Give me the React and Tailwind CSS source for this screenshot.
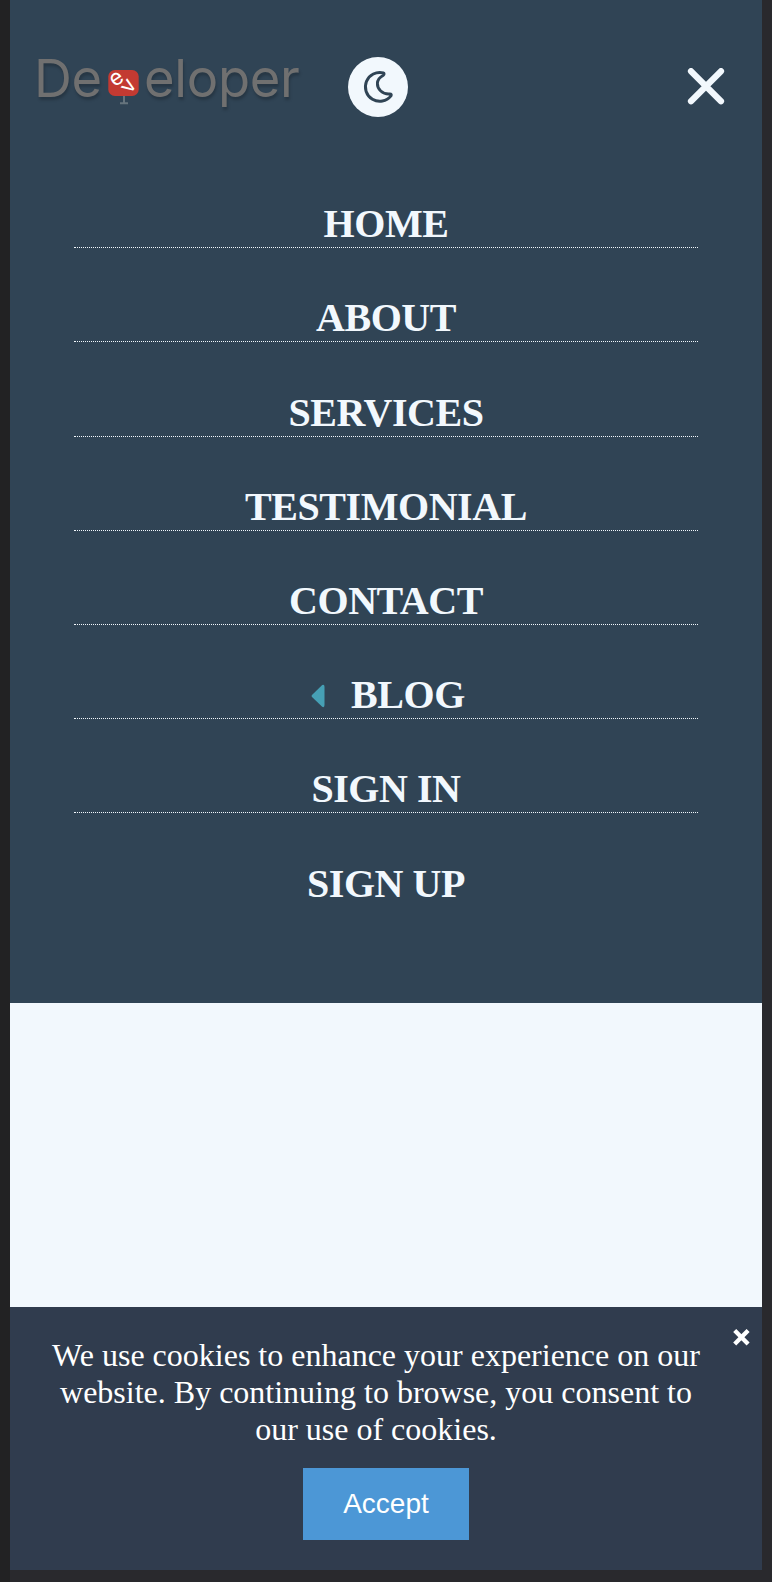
const links = ['Home', 'About', 'Services', 'Testimonial', 'Contact', 'Blog', 'Sign in', 'Sign up'];

function Logo() {
  return (
    <a className="mb-[19px] flex h-[64px] w-[274px] items-center font-['Inter',sans-serif] text-[52.5px] leading-[64px] text-[#707070] [text-shadow:1px_3px_3px_rgba(0,0,0,0.22)]">
      <span className="w-[74px] tracking-[-0.5px]">De</span>
      <svg className="mt-[20px] h-[36px] w-[31px] shrink-0 overflow-visible [text-shadow:none]" viewBox="0 0 31 36">
        <path d="M16 26v7M12 33.3h8" stroke="#66747d" strokeWidth="2" />
        <rect x="0.3" y="0" width="30.4" height="26" rx="6.5" fill="#c33a32" />
        <g fill="#fff" fontSize="22" textAnchor="middle">
          <text transform="translate(8.7 9) rotate(-35)" y="5.8">e</text>
          <text transform="translate(21 16.4) rotate(-55)" y="5.9">v</text>
        </g>
      </svg>
      <span className="ml-[5px] tracking-[-0.3px]">eloper</span>
    </a>
  );
}

function ThemeButton() {
  return (
    <button className="ml-[40px] size-[60px] rounded-full bg-[#f2f8fd]">
      <svg viewBox="0 0 60 60" fill="none" stroke="#304455" strokeWidth="2.9" strokeLinejoin="round">
        <path d="M35.3 15.9A14.4 14.4 0 1 0 43 38.9Q44 36.9 41.8 36.9C34.4 37.5 29.2 32 29.4 26.3C29.5 22.5 32.2 19.9 35.4 18.2Q36.8 16.4 35.3 15.9Z" />
      </svg>
    </button>
  );
}

export default function App() {
  return (
    <div className="flex h-[1582px] w-[772px] bg-[#29292d]">
      <div className="w-[10px] bg-[#222223]" />
      <div className="flex w-[752px] flex-col">
        <header className="h-[1003px] bg-[#304455] text-[#f2f8fd]">
          <div className="flex h-[153px] items-center pt-[21px] pl-[24px]">
            <Logo />
            <ThemeButton />
            <button className="mr-[37px] ml-auto">
              <svg className="size-[38px]" viewBox="0 0 38 38" stroke="currentColor" strokeWidth="6.2" strokeLinecap="round">
                <path d="M4 3.2L34 33.2M34 3.2L4 33.2" />
              </svg>
            </button>
          </div>
          <nav className="px-[64px] pt-px font-['Liberation_Serif',serif] text-[40px] leading-[46px] font-bold tracking-[-0.45px] uppercase">
            {links.map((name) => (
              <a key={name} className="flex h-[94.2px] items-end justify-center border-b border-dotted border-[#f2f8fd] last:border-transparent">
                {name === 'Blog' && (
                  <svg className="mr-[26px] mb-[10px] ml-[4px] h-[24px] w-[14px]" viewBox="0 0 14 24" fill="#46a0b5">
                    <path d="M1 11L11.2 1Q13.5 0 13.5 2.8V21Q13.5 24 11.2 22.8L1 13Q0 12 1 11Z" />
                  </svg>
                )}
                <span>{name}</span>
              </a>
            ))}
          </nav>
        </header>
        <main className="h-[304px] bg-[#f2f8fd]" />
        <section className="relative flex h-[263px] flex-col items-center bg-[#303c4e] pt-[30px] text-white">
          <p className="pr-[20px] text-center font-['Liberation_Serif',serif] text-[32px] leading-[37px]">
            We use cookies to enhance your experience on our
            <br />
            website. By continuing to browse, you consent to
            <br />
            our use of cookies.
          </p>
          <button className="mt-[20px] h-[72px] w-[166px] bg-[#4c97d6] font-['Liberation_Sans',sans-serif] text-[28px]">Accept</button>
          <button className="absolute top-[22px] right-[12px]">
            <svg className="size-[17px]" viewBox="0 0 17 17" stroke="currentColor" strokeWidth="4.3">
              <path d="M1.7 1.5L15.1 14.9M15.1 1.5L1.7 14.9" />
            </svg>
          </button>
        </section>
      </div>
    </div>
  );
}
